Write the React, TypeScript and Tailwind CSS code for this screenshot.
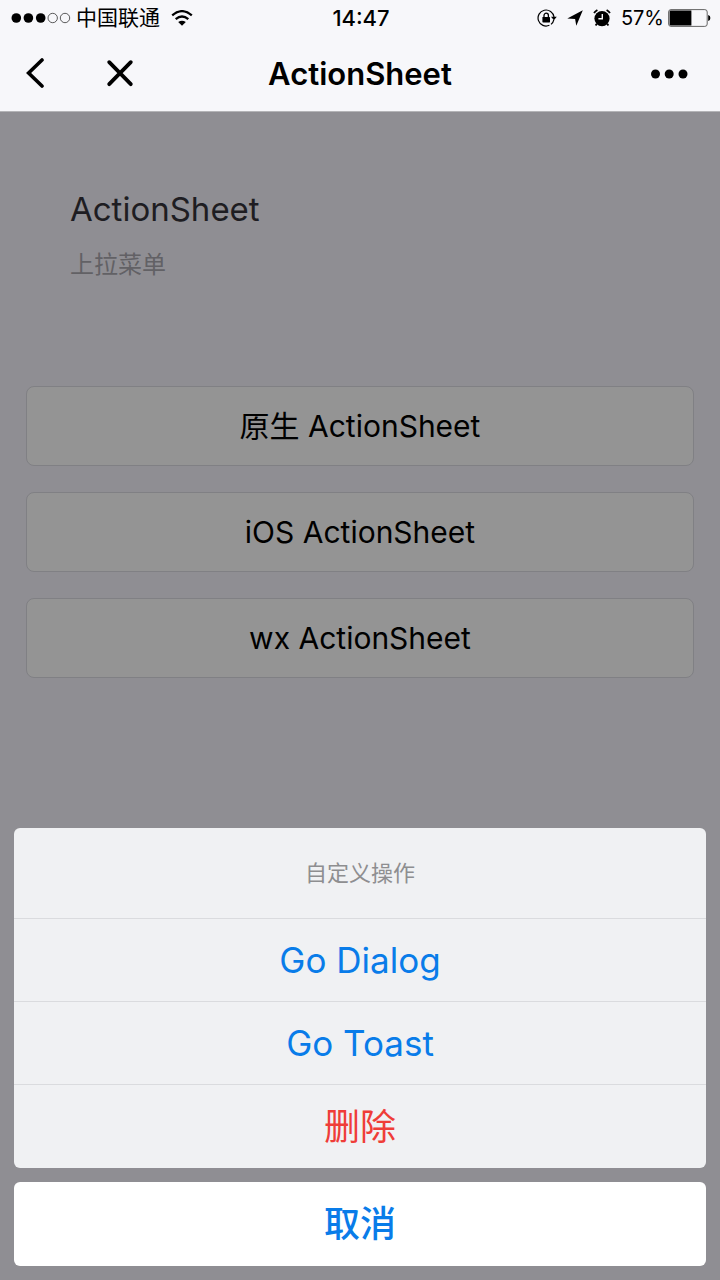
import type { ReactNode } from 'react';

const demos = ['原生 ActionSheet', 'iOS ActionSheet', 'wx ActionSheet'];

const actions = [
  { label: 'Go Dialog', className: 'text-[35px]' },
  { label: 'Go Toast', className: 'text-[35px]' },
  { label: '删除', className: 'text-4xl text-[#ef3d38]' },
];

function SignalIcon() {
  return (
    <svg className="h-3 w-[60px]" viewBox="0 0 60 12" aria-hidden="true">
      {[5.3, 17.4, 29.7].map((x) => (
        <circle key={x} cx={x} cy="6" r="4.8" />
      ))}
      {[41.7, 54].map((x) => (
        <circle key={x} cx={x} cy="6" r="4.7" fill="none" stroke="#333" strokeWidth="0.8" />
      ))}
    </svg>
  );
}

function WifiIcon() {
  return (
    <svg className="h-4 w-[22px]" viewBox="0 0 22 16" aria-hidden="true">
      <g fill="none" stroke="#000" strokeWidth="2.3">
        <path d="M1.2 5.3Q11-3 20.8 5.3" />
        <path d="M4.7 9.2Q11 3.9 17.3 9.2" />
      </g>
      <path d="M7.2 12.1Q11 9.2 14.8 12.1L11 15.7Z" />
    </svg>
  );
}

function RotationLockIcon() {
  return (
    <svg className="h-5 w-5" viewBox="0 0 20 20" aria-hidden="true">
      <path
        d="M12.4 17.3A8 8 0 1 1 17 9M16.8 11.8A8 8 0 0 1 14 16.4"
        fill="none"
        stroke="#000"
        strokeWidth="1.2"
      />
      <path d="M14 8.8H19.8L16.9 12.2Z" />
      <rect x="5.4" y="9" width="7.6" height="5.4" rx="0.6" />
      <path d="M7 9.4V7.4a2.2 2.2 0 0 1 4.4 0V9.4" fill="none" stroke="#000" strokeWidth="1.3" />
    </svg>
  );
}

function LocationIcon() {
  return (
    <svg className="h-4 w-4" viewBox="0 0 16 16" aria-hidden="true">
      <path d="M15.8.3L9.3 15.8 8.1 8.9.3 8.4Z" />
    </svg>
  );
}

function AlarmIcon() {
  return (
    <svg className="h-[18px] w-[18px]" viewBox="0 0 18 18" aria-hidden="true">
      <circle cx="9" cy="9.6" r="7.6" />
      <path d="M3.8 14.8L2.6 16.6M14.2 14.8L15.4 16.6" stroke="#000" strokeWidth="1.8" />
      <path d="M1 4A10 10 0 0 1 4.4 1M13.6 1A10 10 0 0 1 17 4" fill="none" stroke="#000" strokeWidth="1.8" />
      <path d="M9.3 5V9.8H5.4" fill="none" stroke="#f7f7fa" strokeWidth="1.4" />
    </svg>
  );
}

function BatteryIcon() {
  return (
    <svg className="h-[18px] w-[43px]" viewBox="0 0 43 18" aria-hidden="true">
      <rect x="0.6" y="0.6" width="38.6" height="16.8" rx="2.4" fill="none" stroke="#555" strokeWidth="0.9" />
      <path d="M2.8 1.6H23.4V16.4H2.8Q1.6 16.4 1.6 15.2V2.8Q1.6 1.6 2.8 1.6Z" />
      <path d="M40.2 6Q42.4 6.7 42.4 9T40.2 12Z" />
    </svg>
  );
}

function StatusBar() {
  return (
    <div className="grid h-9 grid-cols-[1fr_auto_1fr] items-center pr-[9px] pl-[11px] text-[21px] leading-9">
      <div className="flex items-center gap-[5px]">
        <SignalIcon />
        <span>中国联通</span>
        <span className="pl-1.5">
          <WifiIcon />
        </span>
      </div>
      <time className="text-[22px] font-medium">14:47</time>
      <div className="flex items-center justify-end gap-1">
        <div className="flex items-center gap-2.5 pr-1.5">
          <RotationLockIcon />
          <LocationIcon />
          <AlarmIcon />
        </div>
        <span className="text-xl">57%</span>
        <BatteryIcon />
      </div>
    </div>
  );
}

function NavButton({ label, children }: { label: string; children: ReactNode }) {
  return (
    <button type="button" aria-label={label} className="flex h-11 items-center">
      {children}
    </button>
  );
}

function NavBar() {
  return (
    <nav className="grid h-[75px] grid-cols-[1fr_auto_1fr] items-center px-6">
      <div className="flex items-center gap-[59px]">
        <NavButton label="返回">
          <svg className="h-8 w-[22px]" viewBox="0 0 22 32" aria-hidden="true">
            <path d="M18 2L4.6 15L18 28" fill="none" stroke="#000" strokeWidth="3.6" strokeLinecap="round" />
          </svg>
        </NavButton>
        <NavButton label="关闭">
          <svg className="h-[30px] w-[30px]" viewBox="0 0 30 30" aria-hidden="true">
            <path
              d="M4.2 3.2L25.8 25.2M25.8 3.2L4.2 25.2"
              fill="none"
              stroke="#000"
              strokeWidth="3.8"
              strokeLinecap="round"
            />
          </svg>
        </NavButton>
      </div>
      <h1 className="text-[31px] leading-10 font-semibold">ActionSheet</h1>
      <div className="flex justify-end pr-2">
        <NavButton label="更多">
          <svg className="h-2.5 w-[38px]" viewBox="0 0 38 10" aria-hidden="true">
            <circle cx="5.5" cy="5" r="4.5" />
            <circle cx="19.2" cy="5" r="4.5" />
            <circle cx="33" cy="5" r="4.5" />
          </svg>
        </NavButton>
      </div>
    </nav>
  );
}

export default function App() {
  return (
    <div className="flex min-h-screen flex-col bg-[#8f8e93] font-['Inter','Noto_Sans_CJK_SC',sans-serif] text-black">
      <header className="border-b border-[#b4b4b7] bg-[#f7f7fa]">
        <StatusBar />
        <NavBar />
      </header>

      <main>
        <div className="px-[70px] pt-[76px]">
          <h2 className="text-[33px] leading-[42px] text-[#1e1d22]">ActionSheet</h2>
          <p className="pt-[18px] text-2xl leading-[34px] text-[#626165]">上拉菜单</p>
        </div>
        <div className="flex flex-col gap-[26px] px-[26px] pt-[104px]">
          {demos.map((name) => (
            <button
              key={name}
              type="button"
              className="h-20 rounded-lg border border-[#808084] bg-[#949494] text-[30px] leading-10"
            >
              {name}
            </button>
          ))}
        </div>
      </main>

      <section role="dialog" aria-label="自定义操作" className="mt-auto flex flex-col gap-3.5 p-3.5 text-[#097ce9]">
        <div className="flex flex-col divide-y divide-[#dadbde] overflow-hidden rounded-md bg-[#f0f1f3]">
          <p className="py-7 text-center text-[22px] leading-[34px] text-[#8e8e90]">自定义操作</p>
          {actions.map(({ label, className }) => (
            <button key={label} type="button" className={`h-[83px] ${className}`}>
              {label}
            </button>
          ))}
        </div>
        <button type="button" className="h-[84px] rounded-md bg-white text-4xl font-medium">
          取消
        </button>
      </section>
    </div>
  );
}
